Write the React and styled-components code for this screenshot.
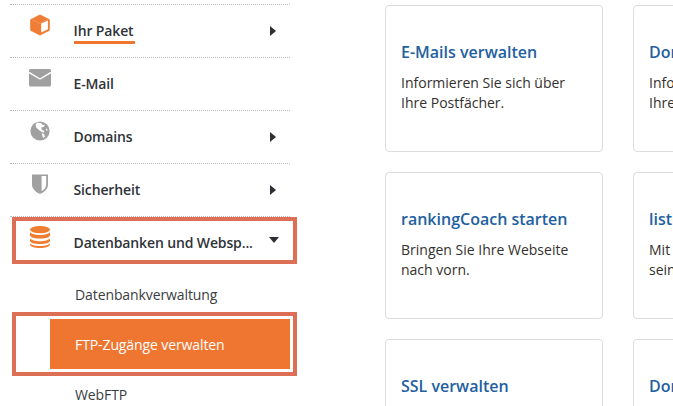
import React from "react";
import styled, { createGlobalStyle } from "styled-components";

const Global = createGlobalStyle`
  html, body { margin: 0; padding: 0; background: #fff; overflow: hidden; }
  body { font-family: "Open Sans", "Liberation Sans", sans-serif; color: #2f3338; }
  #root { width: 673px; height: 406px; overflow: hidden; }
`;

const Page = styled.div`
  display: flex;
  width: 673px;
  height: 406px;
  overflow: hidden;
`;

const Sidebar = styled.nav`
  flex: none;
  width: 280px;
  margin-left: 10px;
  padding-top: 4px;
`;

const NavRow = styled.div`
  position: relative;
  display: flex;
  align-items: center;
  box-sizing: border-box;
  height: 53px;
  padding-right: 14px;
  border-top: 1px dotted #b9b9b9;
  ${(p) => p.$framed && `
    &::after {
      content: "";
      position: absolute;
      top: 0;
      left: 2px;
      right: -7px;
      bottom: 5px;
      border: 4px solid #dc6f55;
    }
  `}
`;

const IconSlot = styled.span`
  flex: none;
  display: flex;
  justify-content: center;
  align-items: center;
  width: 60px;
  height: 24px;
  margin-right: 3.5px;
  transform: translateY(-6px);
`;

const NavLabel = styled.span`
  flex: 1;
  font-size: 14px;
  font-weight: 600;
  line-height: 20px;
  white-space: nowrap;
  letter-spacing: -0.13px;
`;

const Underlined = styled.span`
  display: inline-block;
  position: relative;
  &::after {
    content: "";
    position: absolute;
    left: 0;
    right: -1px;
    bottom: -3px;
    height: 3px;
    background: #ef7631;
  }
`;

const ArrowRight = styled.span`
  flex: none;
  width: 0;
  height: 0;
  border-style: solid;
  border-width: 5.5px 0 5.5px 6px;
  border-color: transparent transparent transparent #2c2f33;
`;

const ArrowDown = styled.span`
  flex: none;
  width: 0;
  height: 0;
  margin: 0 -3px 7px 0;
  border-style: solid;
  border-width: 6px 5.5px 0 5.5px;
  border-color: #2c2f33 transparent transparent transparent;
`;

const SubList = styled.div`
  display: flex;
  flex-direction: column;
  margin-left: 40px;
`;

const SubItem = styled.div`
  position: relative;
  box-sizing: border-box;
  height: 50px;
  padding-left: 25px;
  font-size: 14px;
  line-height: 52px;
  letter-spacing: -0.1px;
  background: ${(p) => (p.$active ? "#ef7631" : "transparent")};
  color: ${(p) => (p.$active ? "#fff" : "#3a3d42")};
  ${(p) => p.$active && `
    &::after {
      content: "";
      position: absolute;
      top: -7px;
      left: -38px;
      right: -7px;
      bottom: -7px;
      border: 4px solid #dc6f55;
    }
  `}
`;

const Main = styled.main`
  flex: none;
  display: grid;
  grid-template-columns: 218px 218px;
  grid-auto-rows: 147px;
  gap: 20px 30px;
  margin-left: 95px;
  padding-top: 5px;
`;

const Card = styled.article`
  box-sizing: border-box;
  padding: 35px 15px 0;
  background: #fff;
  border: 1px solid #dcdcdc;
  border-bottom-width: 1.5px;
  border-radius: 4px;
`;

const CardTitle = styled.h3`
  margin: 0 0 10px;
  font-size: 16px;
  font-weight: 600;
  line-height: 22px;
  color: #23609f;
  white-space: nowrap;
`;

const CardText = styled.p`
  margin: 0;
  font-size: 14px;
  line-height: 20px;
  color: #33302e;
  white-space: pre-line;
`;

const Cube = () => (
  <svg width="22" height="22" viewBox="0 0 22 22">
    <path d="M11 .5 20.8 5.6V16.4L11 21.5 1.2 16.4V5.6Z" fill="#ef7d35" />
    <path d="M12.2 9.6 18.9 6.6V15.2L12.2 18.6Z" fill="#fff" />
    <path d="M3.5 5.9 11 9.4 18.3 5.9" fill="none" stroke="#f5a06b" strokeWidth=".7" />
  </svg>
);

const Mail = () => (
  <svg width="22" height="18" viewBox="0 0 22 18">
    <rect x="0" y="0" width="22" height="17.6" rx="1.5" fill="#a0a0a0" />
    <path d="M0 3.4 11 10 22 3.4" fill="none" stroke="#fff" strokeWidth="1.4" />
  </svg>
);

const Globe = () => (
  <svg width="20" height="20" viewBox="0 0 20 20">
    <circle cx="10" cy="10" r="9.6" fill="#a0a0a0" />
    <path d="M6.8 1.6 11.5 2.2 12.6 4 15 3.8 13.6 6 11.2 6.4 11.8 8.6 14.4 10.2 13.2 11.8 11 10.4 8.6 8.8 6.4 6.8 5.6 4.2Z" fill="#fff" />
    <path d="M11.6 12.2 14 13 15 15.4 13.2 17 12.4 15Z" fill="#fff" />
    <path d="M16.2 7.6 17.6 8.4 17.2 10 16 9.2Z" fill="#fff" />
  </svg>
);

const Shield = () => (
  <svg width="16" height="20" viewBox="0 0 16 20">
    <path d="M0 .4H16V10.5C16 15 12 18.4 8 19.8 4 18.4 0 15 0 10.5Z" fill="#a0a0a0" />
    <path d="M9.6 2H14.2V10.5C14.2 13.4 12 15.8 9.6 17.2Z" fill="#fff" />
  </svg>
);

const Database = () => (
  <svg width="20" height="22" viewBox="0 0 20 22">
    <ellipse cx="10" cy="3.6" rx="10" ry="3.6" fill="#ef7d31" />
    <path d="M0 6C1 8 5.5 9 10 9S19 8 20 6V9.2C20 11.2 15.5 12.6 10 12.6S0 11.2 0 9.2Z" fill="#ef7d31" />
    <path d="M0 12.2C1 14.2 5.5 15.2 10 15.2S19 14.2 20 12.2V14.7C20 16.7 15.5 18 10 18S0 16.7 0 14.7Z" fill="#ef7d31" />
    <path d="M0 17.2C1 19 5.5 20 10 20S19 19 20 17.2V18.5C20 20.5 15.5 22 10 22S0 20.5 0 18.5Z" fill="#ef7d31" />
  </svg>
);

const cards = [
  ["E-Mails verwalten", "Informieren Sie sich über\nIhre Postfächer."],
  ["Domains verwalten", "Informieren Sie sich über\nIhre Domains."],
  ["rankingCoach starten", "Bringen Sie Ihre Webseite\nnach vorn."],
  ["listlocal starten", "Mit listlocal optimieren Sie\nseine Einträge."],
  ["SSL verwalten", "Schützen Sie Ihre Webseite."],
  ["Domains kaufen", "Suchen Sie Ihre Domain."],
];

export default function App() {
  return (
    <Page>
      <Global />
      <Sidebar>
        <NavRow>
          <IconSlot><Cube /></IconSlot>
          <NavLabel><Underlined>Ihr Paket</Underlined></NavLabel>
          <ArrowRight />
        </NavRow>
        <NavRow>
          <IconSlot><Mail /></IconSlot>
          <NavLabel>E-Mail</NavLabel>
        </NavRow>
        <NavRow>
          <IconSlot><Globe /></IconSlot>
          <NavLabel>Domains</NavLabel>
          <ArrowRight />
        </NavRow>
        <NavRow>
          <IconSlot><Shield /></IconSlot>
          <NavLabel>Sicherheit</NavLabel>
          <ArrowRight />
        </NavRow>
        <NavRow $framed>
          <IconSlot><Database /></IconSlot>
          <NavLabel>Datenbanken und Websp...</NavLabel>
          <ArrowDown />
        </NavRow>
        <SubList>
          <SubItem>Datenbankverwaltung</SubItem>
          <SubItem $active>FTP-Zugänge verwalten</SubItem>
          <SubItem>WebFTP</SubItem>
        </SubList>
      </Sidebar>
      <Main>
        {cards.map(([title, text]) => (
          <Card key={title}>
            <CardTitle>{title}</CardTitle>
            <CardText>{text}</CardText>
          </Card>
        ))}
      </Main>
    </Page>
  );
}
